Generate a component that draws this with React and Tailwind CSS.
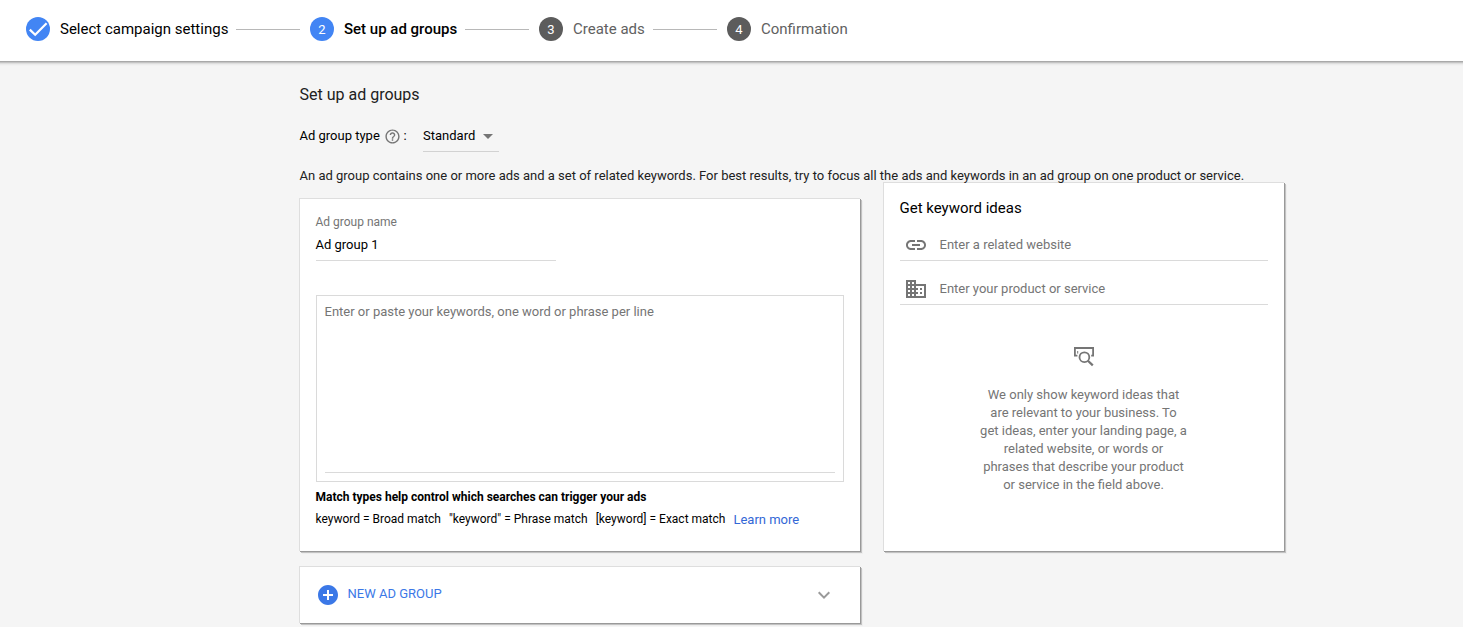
import React from "react";

const steps = [
  { label: "Select campaign settings", box: "w-[168px]", tone: "text-black", dot: "bg-[#4285f4]", done: true },
  { label: "Set up ad groups", box: "w-[113px]", tone: "text-black font-medium", dot: "bg-[#4285f4]" },
  { label: "Create ads", box: "w-[72px]", tone: "text-[#616161]", dot: "bg-[#5c5c5c]" },
  { label: "Confirmation", box: "w-[87px]", tone: "text-[#616161]", dot: "bg-[#5c5c5c]" },
];

function Header() {
  return (
    <header className="flex h-[61px] items-start bg-white pl-[26px] pt-[17px] shadow-[0_1px_0_#a9a9a9,0_2px_0_#c4c4c4,0_3px_0_#dedede,0_4px_0_#ececec,0_5px_0_#f2f2f2]">
      {steps.map((s, i) => (
        <div key={s.label} className="flex h-6 items-center">
          <div className={"flex size-6 items-center justify-center rounded-full text-[13px] text-white " + s.dot}>
            {s.done ? (
              <svg viewBox="0 0 24 24" className="size-6" fill="none" stroke="#fff" strokeWidth="2.2">
                <path d="M3.8 12.6L9.2 17.8L20.6 6.3" />
              </svg>
            ) : (
              <span className="pt-px">{i + 1}</span>
            )}
          </div>
          <div className={"ml-2.5 whitespace-nowrap text-[15px] leading-6 " + s.box + " " + s.tone}>{s.label}</div>
          {i < 3 && <div className="ml-2 mr-2.5 mt-px h-px w-16 bg-[#b8b8b8]" />}
        </div>
      ))}
    </header>
  );
}

const card = "border-l border-t border-[#dedede] bg-white shadow-[1px_1px_0_#999999,2px_2px_0_#c2c2c2,3px_3px_0_#eeeeee] ";

function GroupCard() {
  return (
    <section className={card + "h-[353px] w-[561px] pl-[15.5px] pt-[14px]"}>
      <div className="text-[12px] leading-[18px] text-[#757575]">Ad group name</div>
      <div className="mt-1 h-[26px] w-[240px] border-b border-[#dadada] text-[13px] leading-5 text-black">Ad group 1</div>
      <div className="ml-[0.5px] mt-[34px] flex h-[187px] w-[528px] flex-col justify-between border border-[#dadada] px-2 pb-2 pt-[7px]">
        <div className="-ml-[0.5px] text-[13px] leading-[18px] text-[#757575]">Enter or paste your keywords, one word or phrase per line</div>
        <div className="h-px bg-[#dadada]" />
      </div>
      <div className="mt-1.5 text-[12px] font-bold leading-[18px] text-black">Match types help control which searches can trigger your ads</div>
      <div className="mt-1 flex gap-2 whitespace-nowrap text-[12px] leading-[18px] text-black">
        <span>keyword = Broad match</span>
        <span>"keyword" = Phrase match</span>
        <span>[keyword] = Exact match</span>
        <a className="pt-px text-[13px] text-[#3367d6]">Learn more</a>
      </div>
    </section>
  );
}

function IdeasCard() {
  return (
    <section className={card + "-mt-4 h-[369px] w-[401px] px-4 pt-[14px]"}>
      <h2 className="-ml-[0.5px] text-[15px] leading-[22px] text-black">Get keyword ideas</h2>
      <div className="mt-[14px] flex h-[28px] border-b border-[#dadada]">
        <svg viewBox="0 0 24 24" className="ml-1 size-6" fill="#757575">
          <path d="M3.9 12c0-1.71 1.39-3.1 3.1-3.1h4V7H7c-2.76 0-5 2.24-5 5s2.24 5 5 5h4v-1.9H7c-1.71 0-3.1-1.39-3.1-3.1zM8 13h8v-2H8v2zm9-6h-4v1.9h4c1.71 0 3.1 1.39 3.1 3.1s-1.39 3.1-3.1 3.1h-4V17h4c2.76 0 5-2.24 5-5s-2.24-5-5-5z" />
        </svg>
        <span className="ml-[11.5px] text-[13px] leading-6 text-[#757575]">Enter a related website</span>
      </div>
      <div className="mt-[16px] flex h-[28px] border-b border-[#dadada]">
        <svg viewBox="0 0 24 24" className="ml-1 size-6" fill="#757575">
          <path d="M12 7V3H2v18h20V7H12zM6 19H4v-2h2v2zm0-4H4v-2h2v2zm0-4H4V9h2v2zm0-4H4V5h2v2zm4 12H8v-2h2v2zm0-4H8v-2h2v2zm0-4H8V9h2v2zm0-4H8V5h2v2zm10 12h-8v-2h2v-2h-2v-2h2v-2h-2V9h8v10zm-2-8h-2v2h2v-2zm0 4h-2v2h2v-2z" />
        </svg>
        <span className="ml-[11.5px] text-[13px] leading-6 text-[#757575]">Enter your product or service</span>
      </div>
      <div className="mt-10 flex flex-col items-center">
        <svg viewBox="0 0 24 24" className="size-6" fill="none" stroke="#757575" strokeWidth="1.8">
          <path d="M5.4 10.6H2.9V3H21.1V10.6H19.2" />
          <path d="M5.7 6V8.6" strokeWidth="1" />
          <circle cx="12.4" cy="12.2" r="4.9" />
          <path d="M15.9 15.7L20.8 20.4" strokeWidth="2.2" />
        </svg>
        <p className="-ml-px mt-[17px] whitespace-nowrap text-center text-[13px] leading-[18px] text-[#757575]">
          We only show keyword ideas that<br />are relevant to your business. To<br />get ideas, enter your landing page, a<br />related website, or words or<br />phrases that describe your product<br />or service in the field above.
        </p>
      </div>
    </section>
  );
}

export default function App() {
  return (
    <div className="h-[627px] w-full overflow-hidden bg-[#f5f5f5] font-[Roboto,sans-serif]">
      <Header />
      <main className="pl-[299px] pt-[22px]">
        <h1 className="pl-[0.5px] text-[16px] leading-6 text-[#212121]">Set up ad groups</h1>
        <div className="mt-4 flex h-[29px] items-start pl-[0.5px] text-[13px] leading-[26px] text-black">
          <span className="w-[84px] whitespace-nowrap">Ad group type</span>
          <svg viewBox="0 0 24 24" className="mt-[4.5px] size-[17px]" fill="#757575">
            <path d="M11 18h2v-2h-2v2zm1-16C6.48 2 2 6.48 2 12s4.48 10 10 10 10-4.480 10-10S17.52 2 12 2zm0 18c-4.410 0-8-3.590-8-8s3.590-8 8-8 8 3.590 8 8-3.590 8-8 8zm0-14c-2.210 0-4 1.790-4 4h2c0-1.100.900-2 2-2s2 .900 2 2c0 2-3 1.750-3 5h2c0-2.250 3-2.500 3-5 0-2.210-1.790-4-4-4z" />
          </svg>
          <span className="ml-[3px] w-[19.5px]">:</span>
          <div className="flex h-[29px] w-[76px] items-start border-b border-[#d2d2d2]">
            <span className="w-[60px]">Standard</span>
            <svg viewBox="0 0 10 5" className="mt-[11px] h-[5px] w-[10px]" fill="#757575">
              <path d="M0 0H10L5 5Z" />
            </svg>
          </div>
        </div>
        <p className="relative z-10 mt-[15px] whitespace-nowrap pl-[0.5px] text-[13px] leading-[18px] text-[#212121]">
          An ad group contains one or more ads and a set of related keywords. For best results, try to focus all the ads and keywords in an ad group on one product or service.
        </p>
        <div className="mt-[13px] flex gap-[23px]">
          <GroupCard />
          <IdeasCard />
        </div>
        <section className={card + "mt-[15px] flex h-[57px] w-[561px] items-center pl-[15.5px] pr-[24.5px]"}>
          <svg viewBox="0 0 24 24" className="size-6" fill="#3b78e7">
            <path d="M12 2C6.480 2 2 6.480 2 12s4.480 10 10 10 10-4.480 10-10S17.520 2 12 2zm5 11h-4v4h-2v-4H7v-2h4V7h2v4h4v2z" />
          </svg>
          <span className="-mt-0.5 ml-2 flex-1 text-[13px] leading-5 text-[#3b78e7]">NEW AD GROUP</span>
          <svg viewBox="0 0 24 24" className="size-6" fill="none" stroke="#9a9a9a" strokeWidth="2">
            <path d="M6.700 9.300L12 14.600L17.300 9.300" />
          </svg>
        </section>
      </main>
    </div>
  );
}
